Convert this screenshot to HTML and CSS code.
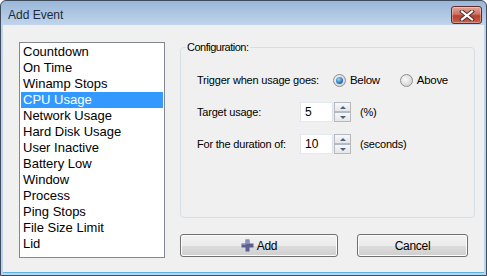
FILE: index.html
```html
<!DOCTYPE html>
<html lang="en">
<head>
    <meta charset="UTF-8">
    <title>Add Event</title>
    <link rel="stylesheet" href="styles.css">
</head>
<body>
<div class="window">
    <div class="titlebar">
        <span class="title">Add Event</span>
        <button class="close-button" title="Close">
            <svg width="16" height="11" viewBox="0 0 16 11">
                <path d="M3 1.5 L13 9.5 M13 1.5 L3 9.5" stroke="#4a2a2a" stroke-width="4" stroke-linecap="square"/>
                <path d="M3 1.5 L13 9.5 M13 1.5 L3 9.5" stroke="#ffffff" stroke-width="2.2" stroke-linecap="square"/>
            </svg>
        </button>
    </div>
    <div class="client">
        <ul class="event-list">
            <li>Countdown</li>
            <li>On Time</li>
            <li>Winamp Stops</li>
            <li class="selected">CPU Usage</li>
            <li>Network Usage</li>
            <li>Hard Disk Usage</li>
            <li>User Inactive</li>
            <li>Battery Low</li>
            <li>Window</li>
            <li>Process</li>
            <li>Ping Stops</li>
            <li>File Size Limit</li>
            <li>Lid</li>
        </ul>
        <div class="side">
            <fieldset class="config">
                <legend>Configuration:</legend>
                <div class="rows">
                    <div class="row">
                        <span class="label wide">Trigger when usage goes:</span>
                        <label class="radio"><span class="dot checked"></span>Below</label>
                        <label class="radio"><span class="dot"></span>Above</label>
                    </div>
                    <div class="row">
                        <span class="label">Target usage:</span>
                        <span class="textbox">5</span>
                        <span class="spinner"><span class="up"></span><span class="down"></span></span>
                        <span class="unit">(%)</span>
                    </div>
                    <div class="row">
                        <span class="label">For the duration of:</span>
                        <span class="textbox">10</span>
                        <span class="spinner"><span class="up"></span><span class="down"></span></span>
                        <span class="unit">(seconds)</span>
                    </div>
                </div>
            </fieldset>
            <div class="buttons">
                <button class="btn add">
                    <svg width="13" height="13" viewBox="0 0 13 13">
                        <path d="M4.5 0.5 H8.5 V4.5 H12.5 V8.5 H8.5 V12.5 H4.5 V8.5 H0.5 V4.5 H4.5 Z" fill="#5d5f8e"/>
                        <path d="M5 1 H8 V5 H5 Z M1 5 H5 V6 H1 Z" fill="#8c8fba"/>
                    </svg>
                    Add
                </button>
                <button class="btn cancel">Cancel</button>
            </div>
        </div>
    </div>
</div>
</body>
</html>
```

FILE: styles.css
```css
* {
    box-sizing: border-box;
}

body {
    margin: 0;
    width: 487px;
    height: 276px;
    overflow: hidden;
    font-family: "Liberation Sans", Arial, sans-serif;
    background-color: #ffffff;
}

.window {
    width: 487px;
    height: 276px;
    border: 1px solid #3f4c5c;
    border-radius: 6px 6px 0 0;
    background: linear-gradient(#9ab6d8, #c0d5ec 24px, #bcd3ec);
    display: flex;
    flex-direction: column;
    padding: 0 2px 2px 2px;
}

.titlebar {
    height: 24px;
    display: flex;
    align-items: center;
    justify-content: space-between;
    padding-left: 5px;
}

.title {
    font-size: 12px;
    color: #1e2a3a;
    margin-top: 3px;
}

.close-button {
    width: 31px;
    height: 18px;
    margin-top: 4px;
    margin-right: 2px;
    padding: 0;
    border: 1px solid #5d2a2a;
    border-radius: 3px;
    background: linear-gradient(#e3a598, #cf7262 45%, #b8402f 55%, #c9604c);
    box-shadow: inset 0 0 0 1px rgba(255, 255, 255, 0.35);
    display: flex;
    align-items: center;
    justify-content: center;
}

.client {
    flex: 1;
    background-color: #f0f0f0;
    border-bottom: 1px solid #5cb3e0;
    display: flex;
    align-items: flex-start;
    padding: 17px 16px 0 16px;
    gap: 15px;
}

.event-list {
    list-style: none;
    margin: 0;
    padding: 1px;
    width: 146px;
    height: 216px;
    background-color: #fff;
    border: 1px solid #828790;
    font-size: 13px;
}

.event-list li {
    height: 16px;
    line-height: 16px;
    padding-left: 2px;
    color: #000;
}

.event-list li.selected {
    background-color: #3399ff;
    color: #fff;
}

.side {
    width: 288px;
    display: flex;
    flex-direction: column;
}

.config {
    margin: 0;
    height: 176px;
    border: 1px solid #d5dfe5;
    border-radius: 4px;
    padding: 17px 6px 0 5px;
    font-size: 11px;
    color: #000;
}

.config legend {
    padding: 0 1px;
    line-height: 11px;
    letter-spacing: -0.5px;
}

.rows {
    padding-left: 11px;
    display: flex;
    flex-direction: column;
    gap: 12px;
}

.row {
    height: 20px;
    display: flex;
    align-items: center;
}

.label {
    width: 103px;
    letter-spacing: -0.2px;
}

.label.wide {
    width: 136px;
}

.radio {
    display: flex;
    align-items: center;
    gap: 4px;
    margin-right: 20px;
    font-size: 11.5px;
    letter-spacing: -0.3px;
}

.dot {
    width: 13px;
    height: 13px;
    border-radius: 50%;
    border: 1px solid #8e8f8f;
    background: radial-gradient(circle at 40% 40%, #fafafa, #dcdcdc 60%, #cfcfcf);
    display: flex;
    align-items: center;
    justify-content: center;
}

.dot.checked::after {
    content: "";
    width: 7px;
    height: 7px;
    border-radius: 50%;
    background: radial-gradient(circle at 40% 35%, #a6d6f6, #2a7ec6 55%, #0c4f8f);
}

.textbox {
    width: 33px;
    height: 20px;
    border: 1px solid #abadb3;
    border-top-color: #e3e9ef;
    border-left-color: #e2e3ea;
    border-right-color: #dbdfe6;
    border-bottom-color: #e3e9ef;
    background-color: #fff;
    padding-left: 4px;
    line-height: 18px;
    font-size: 12px;
}

.spinner {
    width: 17px;
    height: 20px;
    margin-left: 1px;
    display: flex;
    flex-direction: column;
    gap: 0;
}

.spinner span {
    flex: 1;
    border: 1px solid #b5b9c2;
    background: linear-gradient(#f7f7f7, #e6e6e6);
    display: flex;
    align-items: center;
    justify-content: center;
}

.spinner .up::after {
    content: "";
    border-left: 3px solid transparent;
    border-right: 3px solid transparent;
    border-bottom: 3px solid #4d6185;
}

.spinner .down::after {
    content: "";
    border-left: 3px solid transparent;
    border-right: 3px solid transparent;
    border-top: 3px solid #4d6185;
}

.unit {
    margin-left: 9px;
    letter-spacing: -0.2px;
}

.buttons {
    margin-top: 16px;
    display: flex;
    justify-content: space-between;
}

.btn {
    height: 23px;
    border: 1px solid #707070;
    border-radius: 3px;
    background: linear-gradient(#f2f2f2, #ebebeb 50%, #dddddd 51%, #cfcfcf);
    box-shadow: inset 0 0 0 1px #fcfcfc;
    font-family: "Liberation Sans", Arial, sans-serif;
    font-size: 12px;
    letter-spacing: -0.3px;
    color: #000;
    display: flex;
    align-items: center;
    justify-content: center;
    gap: 3px;
    padding: 0;
}

.btn.add {
    width: 158px;
}

.btn.cancel {
    width: 111px;
}
```
